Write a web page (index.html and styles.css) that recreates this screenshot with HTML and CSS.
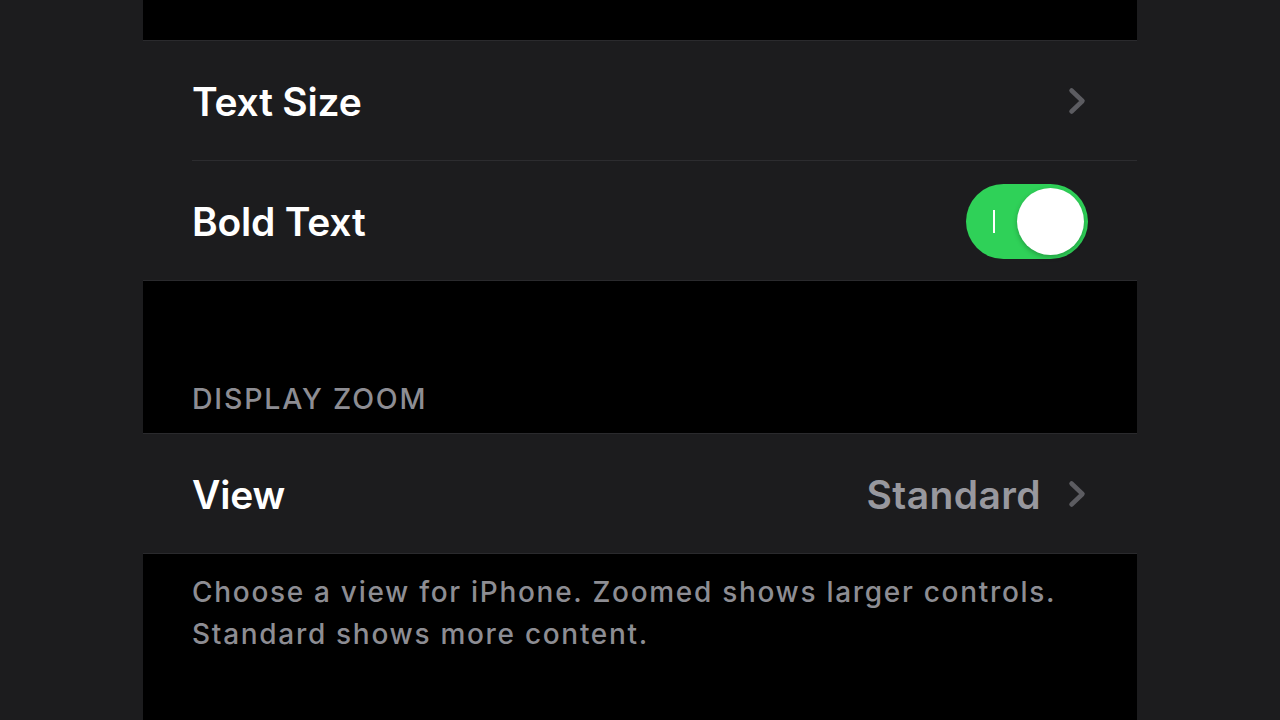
FILE: index.html
```html
<!DOCTYPE html>
<html lang="en">

<head>
    <meta charset="utf-8" />
    <title>Display &amp; Text Size</title>
    <link rel="stylesheet" href="styles.css">
</head>

<body>
    <div class="page">
        <div class="spacer top"></div>

        <!-- text group -->
        <div class="group">
            <div class="row">
                <span class="label">Text Size</span>
                <svg class="chevron" width="18" height="28" viewBox="0 0 18 28">
                    <polyline points="3.5,3.5 14.5,14 3.5,24.5" />
                </svg>
            </div>
            <div class="sep"></div>
            <div class="row">
                <span class="label">Bold Text</span>
                <div class="toggle on">
                    <span class="mark"></span>
                    <span class="knob"></span>
                </div>
            </div>
        </div>

        <div class="header">DISPLAY ZOOM</div>

        <div class="group">
            <div class="row">
                <span class="label">View</span>
                <span class="value">Standard</span>
                <svg class="chevron" width="18" height="28" viewBox="0 0 18 28">
                    <polyline points="3.5,3.5 14.5,14 3.5,24.5" />
                </svg>
            </div>
        </div>

        <div class="footer">
            Choose a view for iPhone. Zoomed shows larger controls.<br>
            Standard shows more content.
        </div>
    </div>
</body>

</html>
```

FILE: styles.css
```css
* {
    box-sizing: border-box;
}

body {
    margin: 0;
    background: #1c1c1e;
    font-family: Inter, "Noto Sans", sans-serif;
    color: #fff;
    height: 720px;
    overflow: hidden;
}

.page {
    width: 994px;
    margin: 0 auto;
    background: #000;
    min-height: 720px;
}

.spacer.top {
    height: 40px;
}

.group {
    background: #1c1c1e;
    border-top: 1px solid #2a2a2d;
    border-bottom: 1px solid #2a2a2d;
}

.row {
    height: 119px;
    display: flex;
    align-items: center;
    padding: 1px 49px 0;
}

.sep {
    height: 1px;
    margin-left: 49px;
    background: #2c2c2f;
}

.label {
    flex: 1;
    font-size: 39px;
    font-weight: 600;
    letter-spacing: -0.2px;
}

.value {
    font-size: 39px;
    font-weight: 600;
    color: #98989e;
    margin-right: 27px;
    letter-spacing: 0.4px;
}

.chevron {
    margin-right: 2px;
}

.chevron polyline {
    fill: none;
    stroke: #5c5c61;
    stroke-width: 4.5;
    stroke-linecap: round;
    stroke-linejoin: round;
}

.toggle {
    position: relative;
    width: 122px;
    height: 75px;
    border-radius: 38px;
    background: #2fd158;
}

.toggle .mark {
    position: absolute;
    left: 27px;
    top: 26px;
    width: 2px;
    height: 23px;
    background: #fff;
}

.toggle .knob {
    position: absolute;
    right: 4px;
    top: 4px;
    width: 67px;
    height: 67px;
    border-radius: 50%;
    background: #fff;
    box-shadow: 0 2px 5px rgba(0, 0, 0, .25);
}

.header {
    height: 152px;
    padding: 0 49px 17px;
    display: flex;
    align-items: flex-end;
    font-size: 28.5px;
    font-weight: 500;
    color: #8d8d93;
    letter-spacing: 1.8px;
}

.footer {
    padding: 17px 49px 0;
    font-size: 28px;
    font-weight: 500;
    line-height: 42px;
    color: #8d8d93;
    letter-spacing: 1.7px;
}
```
